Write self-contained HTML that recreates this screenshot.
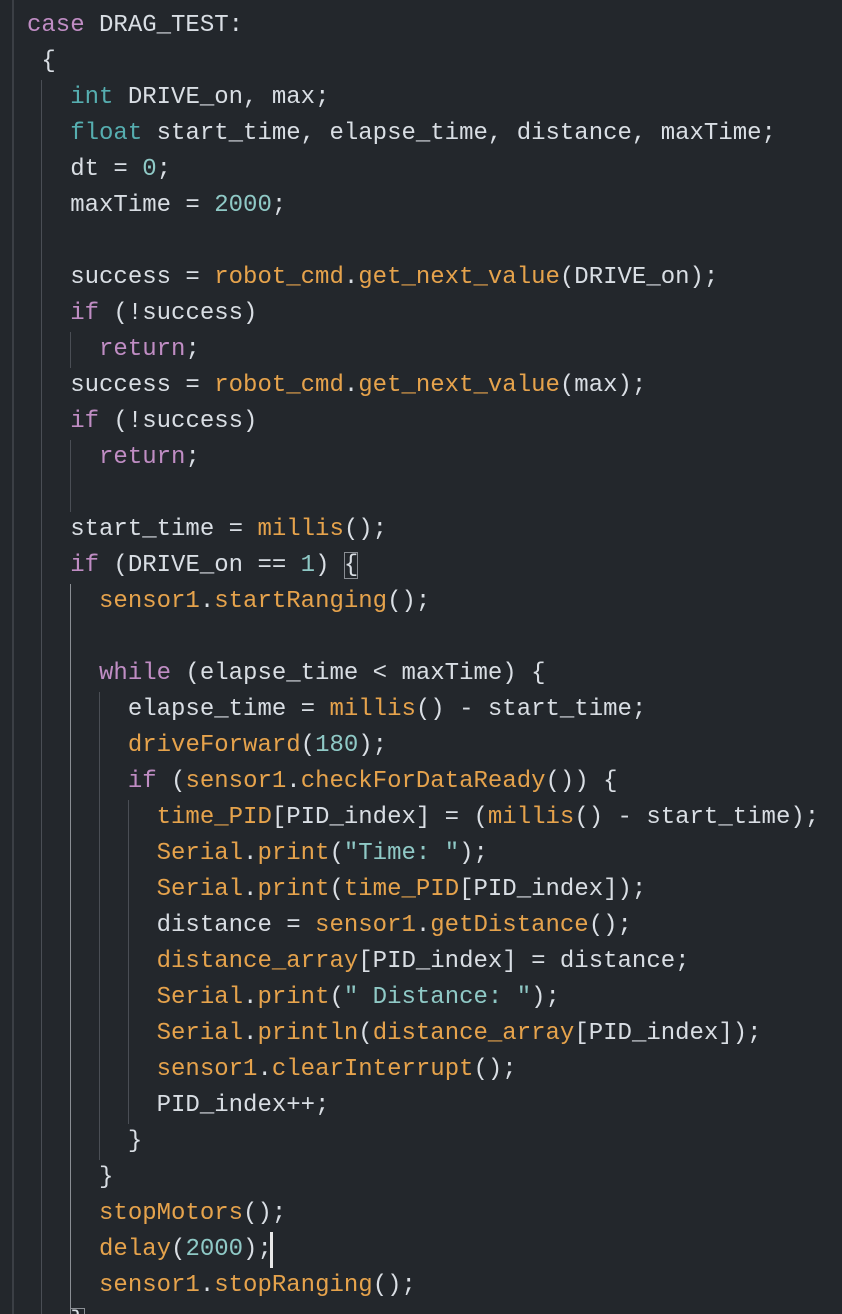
<!DOCTYPE html>
<html><head><meta charset="utf-8"><style>
html,body{margin:0;padding:0;background:#23272c;width:842px;height:1314px;overflow:hidden}
.wrap{position:relative;width:842px;height:1314px;overflow:hidden}
.border{position:absolute;left:12px;top:0;width:2px;height:1314px;background:#3b3f45}
.g{position:absolute;width:1px;background:#4a4e55}
pre{position:absolute;left:27px;top:8px;margin:0;font-family:"Liberation Mono",monospace;font-size:24px;line-height:36px;color:#d9dee4;white-space:pre}
.k{color:#c08dc4}.t{color:#56aeb0}.f{color:#e6a34c}.n{color:#8fc9c6}.s{color:#8fc9c6}
.box{outline:1px solid #8a8e94;outline-offset:-1px}
.cur{position:absolute;left:270px;top:1232px;width:3px;height:36px;background:#e8e8e8}
</style></head><body>
<div class="wrap">
<div class="border"></div>
<div class="g" style="left:41px;top:80px;height:1234px"></div>
<div class="g" style="left:70px;top:332px;height:36px"></div>
<div class="g" style="left:70px;top:440px;height:72px"></div>
<div class="g" style="left:70px;top:584px;height:730px;background:#8a8e94"></div>
<div class="g" style="left:99px;top:692px;height:468px"></div>
<div class="g" style="left:128px;top:800px;height:324px"></div>
<pre><span class="k">case</span> DRAG_TEST:
 {
   <span class="t">int</span> DRIVE_on, max;
   <span class="t">float</span> start_time, elapse_time, distance, maxTime;
   dt = <span class="n">0</span>;
   maxTime = <span class="n">2000</span>;

   success = <span class="f">robot_cmd</span>.<span class="f">get_next_value</span>(DRIVE_on);
   <span class="k">if</span> (!success)
     <span class="k">return</span>;
   success = <span class="f">robot_cmd</span>.<span class="f">get_next_value</span>(max);
   <span class="k">if</span> (!success)
     <span class="k">return</span>;

   start_time = <span class="f">millis</span>();
   <span class="k">if</span> (DRIVE_on == <span class="n">1</span>) <span class="box">{</span>
     <span class="f">sensor1</span>.<span class="f">startRanging</span>();

     <span class="k">while</span> (elapse_time &lt; maxTime) {
       elapse_time = <span class="f">millis</span>() - start_time;
       <span class="f">driveForward</span>(<span class="n">180</span>);
       <span class="k">if</span> (<span class="f">sensor1</span>.<span class="f">checkForDataReady</span>()) {
         <span class="f">time_PID</span>[PID_index] = (<span class="f">millis</span>() - start_time);
         <span class="f">Serial</span>.<span class="f">print</span>(<span class="s">"Time: "</span>);
         <span class="f">Serial</span>.<span class="f">print</span>(<span class="f">time_PID</span>[PID_index]);
         distance = <span class="f">sensor1</span>.<span class="f">getDistance</span>();
         <span class="f">distance_array</span>[PID_index] = distance;
         <span class="f">Serial</span>.<span class="f">print</span>(<span class="s">" Distance: "</span>);
         <span class="f">Serial</span>.<span class="f">println</span>(<span class="f">distance_array</span>[PID_index]);
         <span class="f">sensor1</span>.<span class="f">clearInterrupt</span>();
         PID_index++;
       }
     }
     <span class="f">stopMotors</span>();
     <span class="f">delay</span>(<span class="n">2000</span>);
     <span class="f">sensor1</span>.<span class="f">stopRanging</span>();
   <span class="box">}</span></pre>
<div class="cur"></div>
</div>
</body></html>
